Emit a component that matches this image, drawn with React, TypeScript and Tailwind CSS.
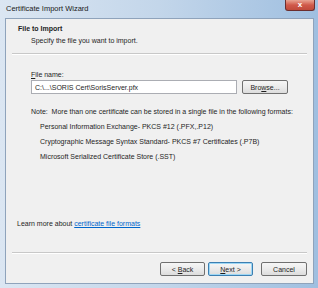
import React from "react";

// Win7 "Certificate Import Wizard" page – file selection step

const formats = [
  "Personal Information Exchange- PKCS #12 (.PFX,.P12)",
  "Cryptographic Message Syntax Standard- PKCS #7 Certificates (.P7B)",
  "Microsoft Serialized Certificate Store (.SST)",
];

function WinButton({
  children,
  primary,
  className = "",
}: {
  children: React.ReactNode;
  primary?: boolean;
  className?: string;
}) {
  return (
    <button
      className={
        "h-[14px] rounded-[2px] border bg-gradient-to-b from-[#f6f6f6] via-[#ebebeb] to-[#dcdcdc] text-[7px] leading-none text-[#1e1e1e] " +
        (primary
          ? "border-[#3c7fb1] shadow-[inset_0_0_0_1px_#9ed7f5] "
          : "border-[#707070] ") +
        className
      }
    >
      {children}
    </button>
  );
}

export default function App() {
  return (
    <div
      className="flex h-[288px] w-[318px] flex-col overflow-hidden bg-gradient-to-r from-[#dbe6f2] via-[#c3d6ea] to-[#9fbfe0] text-[#1e1e1e]"
      style={{ fontFamily: '"Liberation Sans", Arial, sans-serif' }}
    >
      {/* title bar */}
      <div className="flex h-[18px] shrink-0 items-start justify-between">
        <span className="pl-[6px] pt-[4px] text-[7.5px] leading-[9px] text-[#1a1a1a]">
          Certificate Import Wizard
        </span>
        <div className="mr-[3px] flex h-[11px] w-[30px] items-center justify-center rounded-b-[3px] border border-t-0 border-[#6b2e2e] bg-gradient-to-b from-[#e8a493] via-[#d0594a] to-[#c04a3a]">
          <span className="text-[8px] font-bold leading-none text-white">x</span>
        </div>
      </div>

      {/* client area */}
      <div className="flex flex-1 flex-col pb-[4px] pl-[5px] pr-[4px]">
        <div className="flex flex-1 flex-col border border-[#8fa3bb] bg-[#f0f0f0] text-[7px] leading-[9px]">
          {/* header */}
          <div className="flex h-[34px] flex-col pt-[5px]">
            <span className="pl-[12px] font-bold">File to Import</span>
            <span className="pl-[25px] pt-[3px]">Specify the file you want to import.</span>
          </div>
          <div className="mx-[6px] h-[2px] border-t border-b border-t-[#c8c8c8] border-b-white" />

          {/* body */}
          <div className="flex flex-1 flex-col pl-[25px] pr-[25px] pt-[15px]">
            <span>
              <u>F</u>ile name:
            </span>
            <div className="mt-[1px] flex items-center gap-[5px]">
              <div className="flex h-[14px] flex-1 items-center border border-[#abadb3] bg-white px-[3px]">
                C:\...\SORIS Cert\SorisServer.pfx
              </div>
              <WinButton className="w-[46px]">
                Bro<u>w</u>se...
              </WinButton>
            </div>
            <span className="mt-[13px] whitespace-nowrap">
              Note:&nbsp; More than one certificate can be stored in a single file in the following formats:
            </span>
            <div className="mt-[6px] flex flex-col gap-[6px] pl-[9px]">
              {formats.map((f) => (
                <span key={f}>{f}</span>
              ))}
            </div>
          </div>

          <div className="pb-[24px] pl-[11px]">
            Learn more about{" "}
            <a href="#" className="text-[#0066cc] underline">
              certificate file formats
            </a>
          </div>

          <div className="mx-[6px] h-[2px] border-t border-b border-t-[#c8c8c8] border-b-white" />

          {/* footer buttons */}
          <div className="flex h-[29px] items-start justify-end gap-[3px] pr-[6px] pt-[8px]">
            <WinButton className="w-[45px]">
              &lt; <u>B</u>ack
            </WinButton>
            <WinButton primary className="w-[45px]">
              <u>N</u>ext &gt;
            </WinButton>
            <WinButton className="ml-[5px] w-[46px]">Cancel</WinButton>
          </div>
        </div>
      </div>
    </div>
  );
}
